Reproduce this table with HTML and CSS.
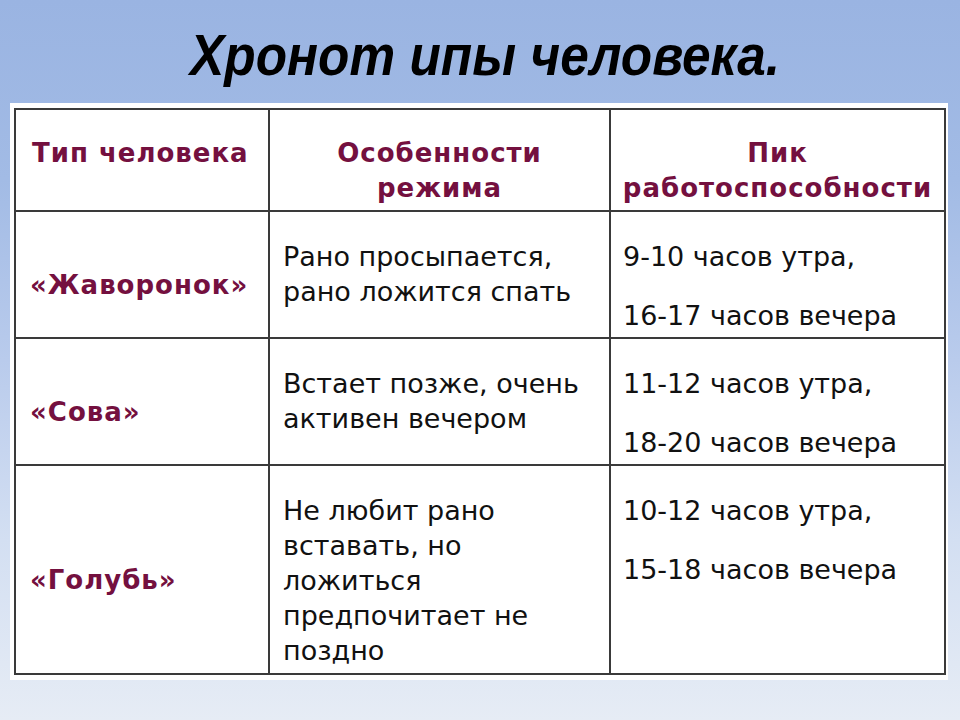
FILE: index.html
```html
<!DOCTYPE html>
<html lang="ru">
<head>
<meta charset="utf-8">
<title>Хронотипы человека</title>
<link rel="stylesheet" href="styles.css">
</head>
<body>
<div class="page">
  <div class="title-bar"><h1 class="title">Хронот ипы человека.</h1></div>
  <div class="panel">
    <table class="chrono">
      <colgroup>
        <col class="c1">
        <col class="c2">
        <col class="c3">
      </colgroup>
      <thead>
        <tr class="head">
          <th class="h-type">Тип человека</th>
          <th class="h-center">Особенности<br>режима</th>
          <th class="h-center">Пик<br>работоспособности</th>
        </tr>
      </thead>
      <tbody>
        <tr class="r1">
          <td class="type">«Жаворонок»</td>
          <td class="mode">Рано просыпается,<br>рано ложится спать</td>
          <td class="peak"><p>9-10 часов утра,</p><p>16-17 часов вечера</p></td>
        </tr>
        <tr class="r2">
          <td class="type">«Сова»</td>
          <td class="mode">Встает позже, очень<br>активен вечером</td>
          <td class="peak"><p>11-12 часов утра,</p><p>18-20 часов вечера</p></td>
        </tr>
        <tr class="r3">
          <td class="type">«Голубь»</td>
          <td class="mode">Не любит рано<br>вставать, но<br>ложиться<br>предпочитает не<br>поздно</td>
          <td class="peak"><p>10-12 часов утра,</p><p>15-18 часов вечера</p></td>
        </tr>
      </tbody>
    </table>
  </div>
</div>
</body>
</html>
```
FILE: styles.css
```css
html, body {
  margin: 0;
  padding: 0;
}
body {
  width: 960px;
  height: 720px;
  overflow: hidden;
  background: linear-gradient(180deg, #9ab4e2 0%, #a2bbe5 25%, #b9cbec 50%, #d3dff2 75%, #e6ecf5 100%);
}
.page {
  display: flex;
  flex-direction: column;
}
.title-bar {
  height: 103px;
  box-sizing: border-box;
  padding-top: 22px;
  padding-left: 10px;
  text-align: center;
}
.title {
  display: inline-block;
  margin: 0;
  font-family: "Liberation Sans", Arial, sans-serif;
  font-weight: bold;
  font-style: italic;
  font-size: 58px;
  line-height: 66px;
  color: #000;
  transform: scaleX(0.886);
}
.panel {
  margin-left: 10px;
  width: 938px;
  height: 577px;
  box-sizing: border-box;
  background: #fff;
  padding: 5px 4px 4px 4px;
}
.chrono {
  width: 930px;
  border-collapse: collapse;
  table-layout: fixed;
  font-family: "DejaVu Sans", Verdana, sans-serif;
}
.c1 { width: 254px; }
.c2 { width: 341px; }
.c3 { width: 335px; }
.chrono th, .chrono td {
  border: 2px solid #3a3a3a;
  padding: 0;
}
.head { height: 102px; }
.r1 { height: 127px; }
.r2 { height: 127px; }
.r3 { height: 209px; }
.chrono th {
  vertical-align: top;
  padding-top: 26px;
  font-weight: bold;
  font-size: 26px;
  letter-spacing: 1px;
  line-height: 35px;
  color: #74103f;
}
.chrono .h-type {
  text-align: left;
  padding-left: 16px;
}
.chrono .h-center {
  text-align: center;
}
.chrono .type {
  vertical-align: middle;
  padding: 22px 0 0 14px;
  font-weight: bold;
  font-size: 26px;
  letter-spacing: 1px;
  line-height: 35px;
  color: #74103f;
}
.chrono .mode, .chrono .peak {
  vertical-align: top;
  padding-top: 27px;
  font-size: 27px;
  line-height: 35px;
  color: #111;
}
.chrono .mode { padding-left: 13px; }
.chrono .peak { padding-left: 12px; }
.peak p { margin: 0; }
.peak p + p { margin-top: 24px; }
```
